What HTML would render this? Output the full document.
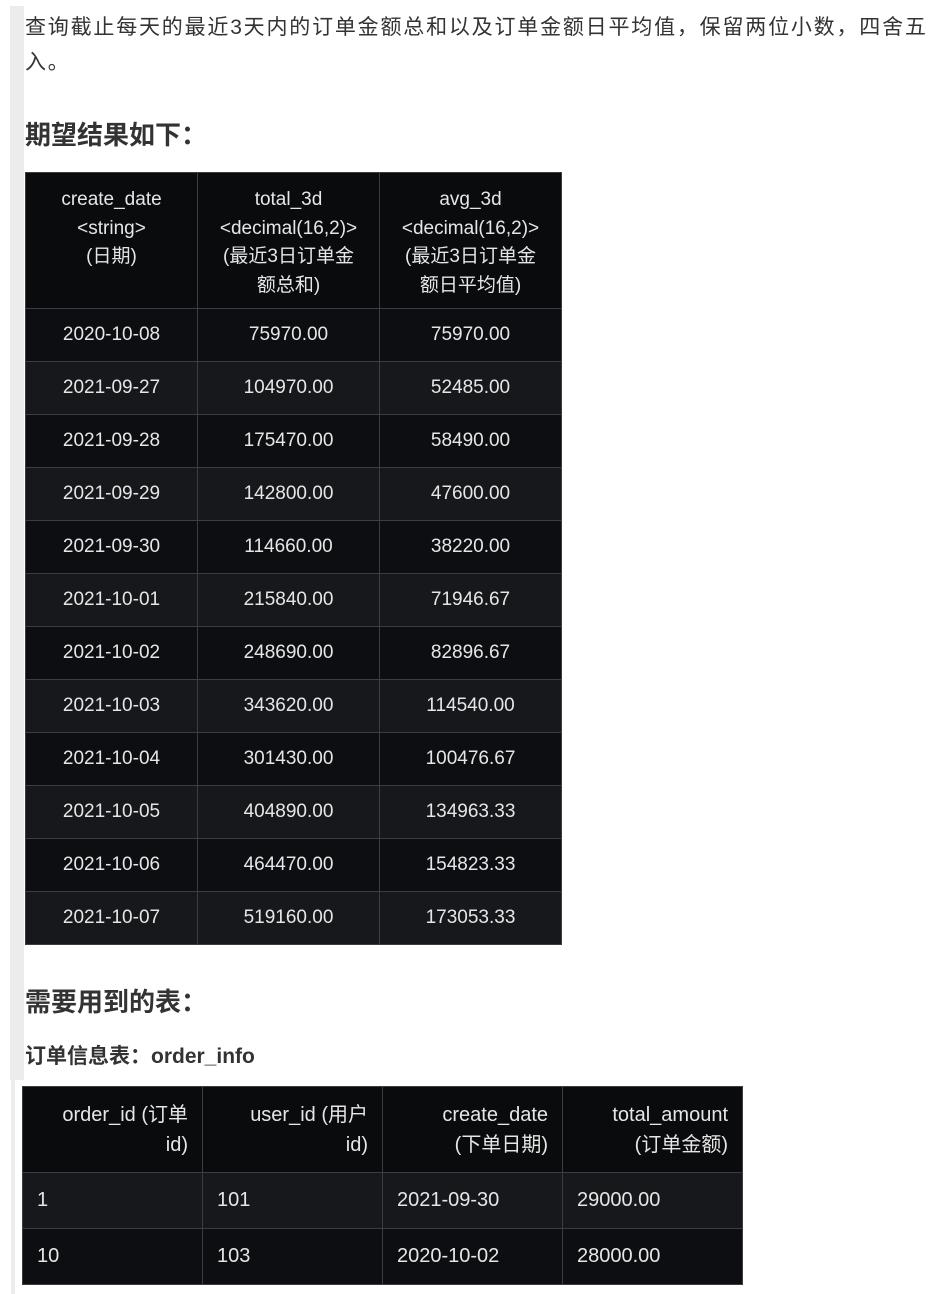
<!DOCTYPE html>
<html><head><meta charset="utf-8"><style>
body{margin:0;background:#fff;width:952px;height:1294px;position:relative;overflow:hidden;font-family:"Liberation Sans","Noto Sans CJK SC",sans-serif;color:#24292f}
.bar{position:absolute;background:#ececec}
.p{position:absolute;left:25px;top:10px;width:925px;font-size:21px;line-height:35px;color:#333;letter-spacing:1.8px;white-space:nowrap}
h2{position:absolute;left:25px;margin:0;font-size:26px;font-weight:bold;color:#333}
table{position:absolute;border-collapse:collapse;color:#e6e6e6;font-size:19px}
td,th{border:1px solid #3a3d42;padding:0}
.t1{left:25px;top:172px;width:537px}
.t1 th{background:#0a0b0d;font-weight:normal;height:136px;line-height:28.5px;vertical-align:top;padding-top:13px;text-align:center;box-sizing:border-box}
.t1 td{height:52px;text-align:center}
.t1 tr:nth-child(odd) td{background:#16181c}
.t1 tr:nth-child(even) td{background:#0d0e11}
.t2{left:22px;top:1086px;width:721px;font-size:20px}
.t2 th{background:#0a0b0d;font-weight:normal;height:86px;text-align:right;padding-right:14px;line-height:30px;box-sizing:border-box}
.t2 td{height:55px;text-align:left;padding-left:14px;background:#16181c}
.t2 tr:nth-child(odd) td{background:#0d0e11}
</style></head><body>
<div class="bar" style="left:10px;top:6px;width:14px;height:1074px"></div>
<div class="bar" style="left:11px;top:1080px;width:4px;height:214px"></div>
<div class="p">查询截止每天的最近3天内的订单金额总和以及订单金额日平均值，保留两位小数，四舍五<br>入。</div>
<h2 style="top:115px">期望结果如下：</h2>
<table class="t1">
<tr><th style="width:172px">create_date<br>&lt;string&gt;<br>(日期)</th><th style="width:182px">total_3d<br>&lt;decimal(16,2)&gt;<br>(最近3日订单金<br>额总和)</th><th>avg_3d<br>&lt;decimal(16,2)&gt;<br>(最近3日订单金<br>额日平均值)</th></tr>
<tr><td>2020-10-08</td><td>75970.00</td><td>75970.00</td></tr>
<tr><td>2021-09-27</td><td>104970.00</td><td>52485.00</td></tr>
<tr><td>2021-09-28</td><td>175470.00</td><td>58490.00</td></tr>
<tr><td>2021-09-29</td><td>142800.00</td><td>47600.00</td></tr>
<tr><td>2021-09-30</td><td>114660.00</td><td>38220.00</td></tr>
<tr><td>2021-10-01</td><td>215840.00</td><td>71946.67</td></tr>
<tr><td>2021-10-02</td><td>248690.00</td><td>82896.67</td></tr>
<tr><td>2021-10-03</td><td>343620.00</td><td>114540.00</td></tr>
<tr><td>2021-10-04</td><td>301430.00</td><td>100476.67</td></tr>
<tr><td>2021-10-05</td><td>404890.00</td><td>134963.33</td></tr>
<tr><td>2021-10-06</td><td>464470.00</td><td>154823.33</td></tr>
<tr><td>2021-10-07</td><td>519160.00</td><td>173053.33</td></tr>
</table>
<h2 style="top:982px">需要用到的表：</h2>
<div style="position:absolute;left:25px;top:1040px;font-size:21px;font-weight:bold;color:#333">订单信息表：order_info</div>
<table class="t2">
<tr><th style="width:180px">order_id (订单<br>id)</th><th style="width:180px">user_id (用户<br>id)</th><th style="width:180px">create_date<br>(下单日期)</th><th>total_amount<br>(订单金额)</th></tr>
<tr><td>1</td><td>101</td><td>2021-09-30</td><td>29000.00</td></tr>
<tr><td>10</td><td>103</td><td>2020-10-02</td><td>28000.00</td></tr>
</table>
</body></html>
